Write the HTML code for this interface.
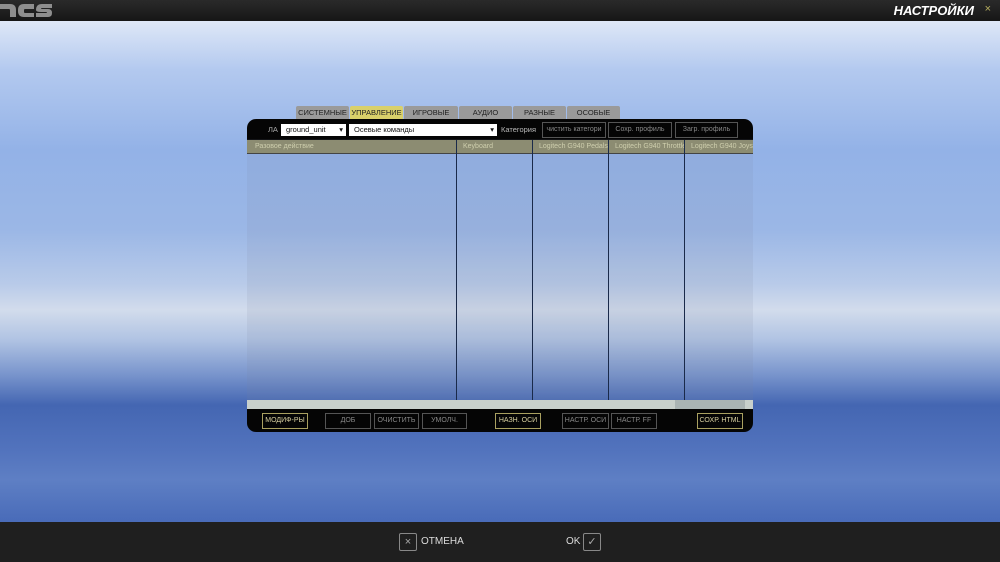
<!DOCTYPE html>
<html><head><meta charset="utf-8"><style>
*{margin:0;padding:0;box-sizing:border-box}
body{width:1000px;height:562px;overflow:hidden;position:relative;font-family:"Liberation Sans","DejaVu Sans",sans-serif;
background:linear-gradient(180deg,#dfe8f7 20px,#b3c9ef 70px,#93b2e7 150px,#9bb7e6 230px,#b9cbe9 285px,#d2dcec 310px,#b0c3e3 340px,#7894cc 375px,#4466b2 405px,#5273bd 450px,#5e7fc4 480px,#4a6cb9 520px)}
.abs{position:absolute}
.top{left:0;top:0;width:1000px;height:21px;background:linear-gradient(#2a2a2a,#161616)}
.bot{left:0;top:522px;width:1000px;height:40px;background:#1f1f1f}
.tab{top:106px;height:13px;background:#9a9a9a;font-size:7.5px;color:#222;text-align:center;line-height:13px;border-radius:2px 2px 0 0}
.btn{border:1px solid #555;color:#888;font-size:7px;text-align:center;height:16px;line-height:14px}
.y{border-color:#a9a060;color:#d8d0a0}
.sel{background:#fff;font-size:7.5px;color:#111;height:12px;line-height:12px;padding-left:5px}
.hd{font-size:7px;color:#cfcfae;line-height:13px;padding-left:7px;white-space:nowrap;overflow:hidden}
</style></head><body>
<div class="abs top"></div>
<svg class="abs" style="left:0;top:2px" width="54" height="17" viewBox="0 0 54 17"><g fill="#8e8e8e"><path d="M0 2h10q6 0 6 6v7h-6v-7q0-1-1-1H0z"/><path d="M18 8q0-6 6-6h10v5H25q-1 0-1 1v2q0 1 1 1h9v4H24q-6 0-6-6z"/><path d="M36 8q0-6 6-6h10v4H42q-1 0-1 1h7q4 0 4 4t-4 4H36v-4h10q1 0 1-1h-6q-5 0-5-2z"/></g></svg>
<div class="abs" style="right:26px;top:3px;color:#fff;font-weight:bold;font-style:italic;font-size:13px">НАСТРОЙКИ</div>
<div class="abs" style="right:9px;top:3px;color:#b8b060;font-size:11px">×</div>

<div class="abs tab" style="left:296px;width:53px">СИСТЕМНЫЕ</div>
<div class="abs tab" style="left:350px;width:53px;background:#d9d06a">УПРАВЛЕНИЕ</div>
<div class="abs tab" style="left:404px;width:54px">ИГРОВЫЕ</div>
<div class="abs tab" style="left:459px;width:53px">АУДИО</div>
<div class="abs tab" style="left:513px;width:53px">РАЗНЫЕ</div>
<div class="abs tab" style="left:567px;width:53px">ОСОБЫЕ</div>

<div class="abs" style="left:247px;top:119px;width:506px;height:21px;background:#050505;border-radius:9px 9px 0 0"></div>
<div class="abs" style="left:247px;top:408px;width:506px;height:24px;background:#050505;border-radius:0 0 9px 9px"></div>
<div class="abs" style="left:268px;top:125px;font-size:7.5px;color:#aaa">ЛА</div>
<div class="abs sel" style="left:281px;top:124px;width:65px">ground_unit<span style="float:right;padding-right:3px">▾</span></div>
<div class="abs sel" style="left:349px;top:124px;width:148px">Осевые команды<span style="float:right;padding-right:3px">▾</span></div>
<div class="abs" style="left:501px;top:125px;font-size:7.5px;color:#bbb">Категория</div>
<div class="abs btn" style="left:542px;top:122px;width:64px;overflow:hidden;white-space:nowrap">чистить категори</div>
<div class="abs btn" style="left:608px;top:122px;width:64px">Сохр. профиль</div>
<div class="abs btn" style="left:675px;top:122px;width:63px">Загр. профиль</div>

<div class="abs" style="left:247px;top:139px;width:506px;height:261px;background:rgba(120,130,160,.12)"></div>
<div class="abs" style="left:247px;top:140px;width:506px;height:14px;background:#8c8c72;border-bottom:1px solid #444"></div>
<div class="abs hd" style="left:248px;top:140px;width:208px">Разовое действие</div>
<div class="abs hd" style="left:456px;top:140px;width:76px">Keyboard</div>
<div class="abs hd" style="left:532px;top:140px;width:76px">Logitech G940 Pedals</div>
<div class="abs hd" style="left:608px;top:140px;width:76px">Logitech G940 Throttle</div>
<div class="abs hd" style="left:684px;top:140px;width:69px">Logitech G940 Joystick</div>
<div class="abs" style="left:456px;top:140px;width:1px;height:260px;background:#1a2a4a"></div>
<div class="abs" style="left:532px;top:140px;width:1px;height:260px;background:#1a2a4a"></div>
<div class="abs" style="left:608px;top:140px;width:1px;height:260px;background:#1a2a4a"></div>
<div class="abs" style="left:684px;top:140px;width:1px;height:260px;background:#1a2a4a"></div>
<div class="abs" style="left:247px;top:400px;width:506px;height:9px;background:#c8d0cc"></div>
<div class="abs" style="left:675px;top:400px;width:70px;height:9px;background:#aab4b4"></div>

<div class="abs btn y" style="left:262px;top:413px;width:46px">МОДИФ-РЫ</div>
<div class="abs btn" style="left:325px;top:413px;width:46px">ДОБ</div>
<div class="abs btn" style="left:374px;top:413px;width:45px">ОЧИСТИТЬ</div>
<div class="abs btn" style="left:422px;top:413px;width:45px">УМОЛЧ.</div>
<div class="abs btn y" style="left:495px;top:413px;width:46px">НАЗН. ОСИ</div>
<div class="abs btn" style="left:562px;top:413px;width:47px">НАСТР. ОСИ</div>
<div class="abs btn" style="left:611px;top:413px;width:46px">НАСТР. FF</div>
<div class="abs btn y" style="left:697px;top:413px;width:46px">СОХР. HTML</div>

<div class="abs bot"></div>
<div class="abs" style="left:399px;top:533px;width:18px;height:18px;border:1px solid #888;border-radius:2px;color:#aaa;font-size:11px;text-align:center;line-height:16px">×</div>
<div class="abs" style="left:421px;top:536px;color:#ddd;font-size:10px">ОТМЕНА</div>
<div class="abs" style="left:566px;top:536px;color:#ddd;font-size:10px">OK</div>
<div class="abs" style="left:583px;top:533px;width:18px;height:18px;border:1px solid #888;border-radius:2px;color:#aaa;font-size:11px;text-align:center;line-height:16px">✓</div>
</body></html>
